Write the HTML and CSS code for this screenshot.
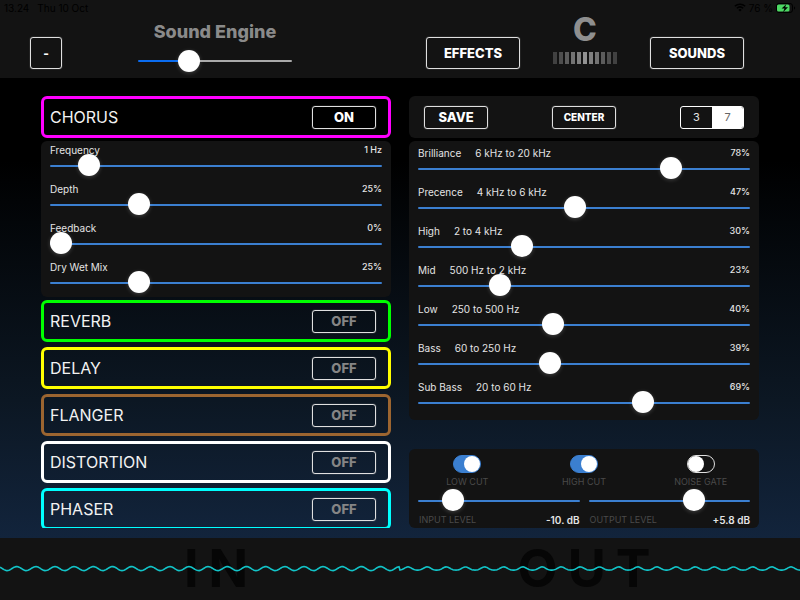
FILE: index.html
```html
<!DOCTYPE html>
<html lang="en">
<head>
<meta charset="utf-8">
<meta name="viewport" content="width=device-width, initial-scale=1">
<title>Sound Engine</title>
<link rel="stylesheet" href="styles.css">
</head>
<body>
<header class="header">
  <div class="status">
    <span>13.24</span>
    <span>Thu 10 Oct</span>
    <span class="status-right">
      <svg width="12" height="9" viewBox="0 0 12 9" fill="none" stroke="#000" stroke-width="1.5"><path d="M.8 3.2a7.6 7.6 0 0 1 10.4 0M2.8 5.3a4.8 4.8 0 0 1 6.4 0"/><path d="M6 8.6 4.3 6.9a2.5 2.5 0 0 1 3.4 0z" fill="#000" stroke="none"/></svg>
      <span>76 %</span>
      <svg width="20" height="10" viewBox="0 0 20 10"><rect x=".5" y=".5" width="16" height="9" rx="2.5" fill="none" stroke="#000"/><rect x="1" y="1.5" width="12.5" height="7" rx="1.6" fill="#4cd964"/><path d="M10.2 1.2 5.6 5.6h2.9L7 9.2l5-4.9H9.2z" fill="#000"/><path d="M18 3.4a1.7 1.7 0 0 1 0 3.2z"/></svg>
    </span>
  </div>
  <div class="header-row">
    <button class="btn btn-square">-</button>
    <div class="engine">
      <label for="engine">Sound Engine</label>
      <input class="slider slider-volume" id="engine" type="range" value="30">
    </div>
    <nav class="header-nav">
      <button class="btn btn-large">EFFECTS</button>
      <div class="tuner">
        <span class="note">C</span>
        <div class="meter"><i class="l1"></i><i class="l2"></i><i class="l3"></i><i class="l4"></i><i class="l5"></i><i class="l6"></i><i class="l5"></i><i class="l4"></i><i class="l3"></i><i class="l2"></i><i class="l1"></i></div>
      </div>
      <button class="btn btn-large">SOUNDS</button>
    </nav>
  </div>
</header>

<main class="main">
  <section class="effects">
    <div class="effect chorus"><h2>CHORUS</h2><button class="btn btn-small">ON</button></div>
    <div class="panel chorus-panel">
      <div class="param"><label for="freq">Frequency</label><output for="freq">1 Hz</output><input class="slider" id="freq" type="range" value="9"></div>
      <div class="param"><label for="depth">Depth</label><output for="depth">25%</output><input class="slider" id="depth" type="range" value="25"></div>
      <div class="param"><label for="feedback">Feedback</label><output for="feedback">0%</output><input class="slider" id="feedback" type="range" value="0"></div>
      <div class="param"><label for="mix">Dry Wet Mix</label><output for="mix">25%</output><input class="slider" id="mix" type="range" value="25"></div>
    </div>
    <div class="effect-list">
      <div class="effect reverb"><h2>REVERB</h2><button class="btn btn-small off">OFF</button></div>
      <div class="effect delay"><h2>DELAY</h2><button class="btn btn-small off">OFF</button></div>
      <div class="effect flanger"><h2>FLANGER</h2><button class="btn btn-small off">OFF</button></div>
      <div class="effect distortion"><h2>DISTORTION</h2><button class="btn btn-small off">OFF</button></div>
      <div class="effect phaser"><h2>PHASER</h2><button class="btn btn-small off">OFF</button></div>
    </div>
  </section>

  <section class="equalizer">
    <div class="panel toolbar">
      <button class="btn btn-small">SAVE</button>
      <button class="btn btn-small btn-center">CENTER</button>
      <div class="segmented"><button>3</button><button class="selected">7</button></div>
    </div>
    <div class="panel eq-panel">
      <div class="param"><label for="b1">Brilliance<span>6 kHz to 20 kHz</span></label><output for="b1">78%</output><input class="slider" id="b1" type="range" value="78"></div>
      <div class="param"><label for="b2">Precence<span>4 kHz to 6 kHz</span></label><output for="b2">47%</output><input class="slider" id="b2" type="range" value="47"></div>
      <div class="param"><label for="b3">High<span>2 to 4 kHz</span></label><output for="b3">30%</output><input class="slider" id="b3" type="range" value="30"></div>
      <div class="param"><label for="b4">Mid<span>500 Hz to 2 kHz</span></label><output for="b4">23%</output><input class="slider" id="b4" type="range" value="23"></div>
      <div class="param"><label for="b5">Low<span>250 to 500 Hz</span></label><output for="b5">40%</output><input class="slider" id="b5" type="range" value="40"></div>
      <div class="param"><label for="b6">Bass<span>60 to 250 Hz</span></label><output for="b6">39%</output><input class="slider" id="b6" type="range" value="39"></div>
      <div class="param"><label for="b7">Sub Bass<span>20 to 60 Hz</span></label><output for="b7">69%</output><input class="slider" id="b7" type="range" value="69"></div>
    </div>
    <div class="panel levels-panel">
      <div class="toggles">
        <label><input type="checkbox" checked>LOW CUT</label>
        <label><input type="checkbox" checked>HIGH CUT</label>
        <label><input type="checkbox">NOISE GATE</label>
      </div>
      <div class="levels">
        <div class="level"><input class="slider" id="in" type="range" value="17"><label for="in">INPUT LEVEL</label><output for="in">-10. dB</output></div>
        <div class="level"><input class="slider" id="out" type="range" value="68"><label for="out">OUTPUT LEVEL</label><output for="out">+5.8 dB</output></div>
      </div>
    </div>
  </section>
</main>

<footer class="scope">
  <span>IN</span>
  <span>OUT</span>
  <svg class="wave" viewBox="0 0 800 12" preserveAspectRatio="none"><path id="wave" fill="none" stroke="#12c4c8" stroke-width="1.6"/></svg>
</footer>
<script src="wave.js"></script>
</body>
</html>
```
FILE: styles.css
```css
* {
  box-sizing: border-box;
}

body {
  margin: 0;
  height: 100vh;
  display: flex;
  flex-direction: column;
  background: #000;
  color: #e4e4e4;
  font-family: Inter, "Liberation Sans", sans-serif;
  font-size: 10px;
}

button {
  font-family: inherit;
  padding: 0;
}

/* Header */
.header {
  height: 78px;
  background: #131313;
}

.status {
  height: 15px;
  padding: 0 4px;
  display: flex;
  align-items: center;
  gap: 8px;
  color: #000;
}

.status-right {
  margin-left: auto;
  display: flex;
  align-items: center;
  gap: 3px;
}

.header-row {
  display: flex;
  align-items: flex-end;
  height: 54px;
  padding: 0 56px 0 30px;
}

.btn {
  border: 1px solid #e0e0e0;
  border-radius: 3px;
  background: transparent;
  color: #fff;
  font-weight: 800;
  box-shadow: 0 0 1px #bbb;
}

.btn-square {
  width: 32px;
  height: 32px;
  font-size: 12px;
}

.btn-large {
  width: 94px;
  height: 32px;
  font-size: 13px;
}

.btn-small {
  width: 64px;
  height: 23px;
  font-size: 13px;
}

.btn-center {
  font-size: 10px;
}

.btn.off {
  color: #858585;
}

.engine {
  width: 154px;
  margin-left: 76px;
  display: flex;
  flex-direction: column;
  gap: 9px;
}

.engine label {
  color: #8a8a8a;
  font-size: 18px;
  font-weight: 800;
  line-height: 24px;
  text-align: center;
}

.header-nav {
  margin-left: auto;
  display: flex;
  align-items: flex-end;
  gap: 33px;
}

.tuner {
  width: 64px;
  display: flex;
  flex-direction: column;
  align-items: center;
  gap: 6px;
  padding-bottom: 5px;
}

.note {
  color: #8f8f8f;
  font-size: 32px;
  font-weight: 800;
  line-height: 32px;
}

.meter {
  display: flex;
  gap: 2px;
}

.meter i {
  width: 4px;
  height: 12px;
}

.l1 { background: #414141; }
.l2 { background: #4e4e4e; }
.l3 { background: #5c5c5c; }
.l4 { background: #737373; }
.l5 { background: #808080; }
.l6 { background: #929292; }

/* Sliders */
.slider {
  -webkit-appearance: none;
  appearance: none;
  display: block;
  width: 100%;
  height: 16px;
  margin: 0;
  background: transparent;
}

.slider::-webkit-slider-runnable-track {
  height: 2px;
  border-radius: 1px;
  background: #3b7fd0;
}

.slider-volume::-webkit-slider-runnable-track {
  background: linear-gradient(to right, #0a6cf0 34%, #a9a9a9 34%);
}

.slider::-webkit-slider-thumb {
  -webkit-appearance: none;
  width: 22px;
  height: 22px;
  margin-top: -11px;
  border-radius: 50%;
  background: #fff;
  box-shadow: 0 1px 4px rgba(255, 255, 255, 0.2);
}

.slider-volume::-webkit-slider-thumb {
  margin-top: -10px;
}

/* Main area */
.main {
  flex: 1;
  min-height: 0;
  display: grid;
  grid-template-columns: 1fr 1fr;
  grid-template-rows: minmax(0, 1fr);
  gap: 18px;
  padding: 18px 41px 10px;
  background: linear-gradient(#000 18%, #0c1723 70%, #12243c);
}

.panel {
  border-radius: 6px;
  background: #131313;
}

.effects {
  overflow: hidden;
}

.effect {
  height: 42px;
  padding: 0 12px 0 6px;
  display: flex;
  align-items: center;
  justify-content: space-between;
  border: 3px solid;
  border-radius: 6px;
}

.effect h2 {
  margin: 0;
  color: #f2f2f2;
  font-size: 16px;
  font-weight: 400;
}

.effect-list {
  display: flex;
  flex-direction: column;
  gap: 5px;
}

.chorus { border-color: #f0f; background: #000; }
.reverb { border-color: #0f0; }
.delay { border-color: #ff0; }
.flanger { border-color: #9c6530; }
.distortion { border-color: #fff; }
.phaser { border-color: #0ff; }

.chorus-panel {
  margin: 3px 0;
  padding: 2px 9px 6px;
  display: grid;
  gap: 8px;
}

.param {
  display: grid;
  grid-template-columns: 1fr auto;
  row-gap: 1px;
  line-height: 14px;
}

.param .slider {
  grid-column: 1 / -1;
}

.param label span {
  margin-left: 14px;
}

.param output {
  font-size: 9px;
  font-weight: 500;
}

.equalizer {
  display: flex;
  flex-direction: column;
}

.toolbar {
  height: 42px;
  padding: 0 15px;
  display: flex;
  align-items: center;
  justify-content: space-between;
}

.segmented {
  width: 64px;
  height: 23px;
  display: flex;
  overflow: hidden;
  border: 1px solid #fff;
  border-radius: 3px;
}

.segmented button {
  flex: 1;
  border: 0;
  background: transparent;
  color: #e4e4e4;
  font-size: 11px;
}

.segmented .selected {
  background: #fff;
  color: #666;
}

.eq-panel {
  margin-top: 3px;
  padding: 5px 9px 9px;
  display: grid;
  gap: 8px;
}

.levels-panel {
  margin-top: auto;
  padding: 6px 0 1px;
}

.toggles {
  display: grid;
  grid-template-columns: repeat(3, 1fr);
}

.toggles label {
  display: flex;
  flex-direction: column;
  align-items: center;
  gap: 2px;
  color: #4a4a4a;
  font-size: 9px;
  line-height: 14px;
}

.toggles input {
  -webkit-appearance: none;
  appearance: none;
  display: flex;
  width: 28px;
  height: 18px;
  margin: 0;
  padding: 0;
  border: 1px solid #e0e0e0;
  border-radius: 9px;
}

.toggles input::before {
  content: "";
  width: 16px;
  height: 16px;
  border-radius: 50%;
  background: #fff;
}

.toggles input:checked {
  justify-content: flex-end;
  border-color: #3b7fd0;
  background: #3b7fd0;
}

.levels {
  display: grid;
  grid-template-columns: 1fr 1fr;
  gap: 9px;
  padding: 4px 9px 0;
}

.level {
  display: grid;
  grid-template-columns: 1fr auto;
  row-gap: 4px;
  line-height: 14px;
}

.level .slider {
  grid-column: 1 / -1;
}

.level label {
  padding-left: 1px;
  color: #4a4a4a;
  font-size: 9px;
}

.level output {
  font-weight: 600;
}

/* Oscilloscope strip */
.scope {
  position: relative;
  height: 62px;
  display: grid;
  grid-template-columns: 1fr 1fr;
  gap: 18px;
  padding: 0 41px;
  background: #131313;
  color: #060606;
  font-size: 52px;
  font-weight: 700;
  line-height: 62px;
  letter-spacing: 10px;
  text-indent: 10px;
  text-align: center;
}

.wave {
  position: absolute;
  left: 0;
  top: 25px;
  width: 100%;
  height: 12px;
}
```
FILE: wave.js
```js
// Input signal on the left half, compressed output signal on the right half.
const period = 19.15;
const points = [];
for (let x = 0; x <= 800; x += 1) {
  let y;
  if (x < 400) {
    y = 5.6 - 2 * Math.cos((x - 16.7) / period * 2 * Math.PI);
  } else {
    const c = Math.cos((x - 408) / period * 2 * Math.PI);
    y = 5.9 - 1.6 * c - 0.4 * c * c;
  }
  points.push(x + " " + y.toFixed(2));
}
document.getElementById("wave").setAttribute("d", "M" + points.join("L"));
```
